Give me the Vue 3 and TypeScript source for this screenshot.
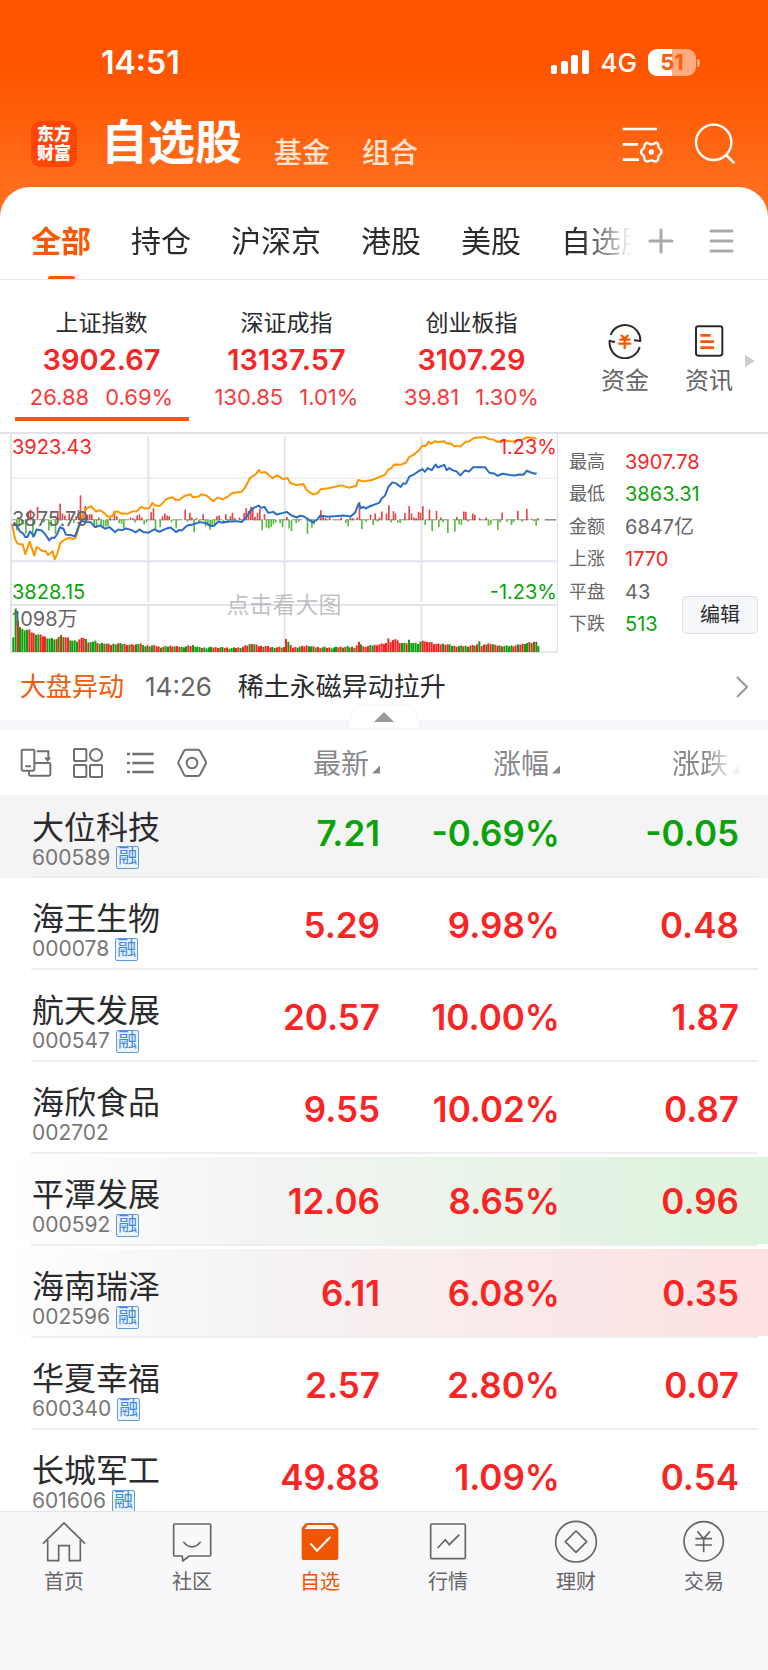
<script setup lang="ts">
import { ref } from 'vue'

type Trend = 'up' | 'down'
type Point = [number, number]

interface Stock {
  name: string
  code: string
  margin: boolean
  price: string
  percent: string
  diff: string
  trend: Trend
  state?: 'pinned' | 'flash-down' | 'flash-up'
}

const groups = ['全部', '持仓', '沪深京', '港股', '美股', '自选股']
const activeGroup = ref('全部')

const indices = [
  { name: '上证指数', value: '3902.67', diff: '26.88', percent: '0.69%' },
  { name: '深证成指', value: '13137.57', diff: '130.85', percent: '1.01%' },
  { name: '创业板指', value: '3107.29', diff: '39.81', percent: '1.30%' },
]
const activeIndex = ref(0)

const stats = [
  { label: '最高', value: '3907.78', tone: 'up' },
  { label: '最低', value: '3863.31', tone: 'down' },
  { label: '金额', value: '6847亿', tone: 'flat' },
  { label: '上涨', value: '1770', tone: 'up' },
  { label: '平盘', value: '43', tone: 'flat' },
  { label: '下跌', value: '513', tone: 'down' },
]

const stocks: Stock[] = [
  { name: '大位科技', code: '600589', margin: true, price: '7.21', percent: '-0.69%', diff: '-0.05', trend: 'down', state: 'pinned' },
  { name: '海王生物', code: '000078', margin: true, price: '5.29', percent: '9.98%', diff: '0.48', trend: 'up' },
  { name: '航天发展', code: '000547', margin: true, price: '20.57', percent: '10.00%', diff: '1.87', trend: 'up' },
  { name: '海欣食品', code: '002702', margin: false, price: '9.55', percent: '10.02%', diff: '0.87', trend: 'up' },
  { name: '平潭发展', code: '000592', margin: true, price: '12.06', percent: '8.65%', diff: '0.96', trend: 'up', state: 'flash-down' },
  { name: '海南瑞泽', code: '002596', margin: true, price: '6.11', percent: '6.08%', diff: '0.35', trend: 'up', state: 'flash-up' },
  { name: '华夏幸福', code: '600340', margin: true, price: '2.57', percent: '2.80%', diff: '0.07', trend: 'up' },
  { name: '长城军工', code: '601606', margin: true, price: '49.88', percent: '1.09%', diff: '0.54', trend: 'up' },
]

const columns = ['最新', '涨幅', '涨跌']

const tabs = [
  { id: 'home', label: '首页' },
  { id: 'community', label: '社区' },
  { id: 'watch', label: '自选' },
  { id: 'market', label: '行情' },
  { id: 'wealth', label: '理财' },
  { id: 'trade', label: '交易' },
]
const activeTab = ref('watch')

const averageLine =
  '36,295 45,340 52,354 60,357 68,357 76,387 89,349 103,391 110,365 120,372 130,378 137,377 144,389 158,378 164,402 172,385 180,355 188,347 196,342 208,337 218,341 226,338 233,320 240,290 250,262 262,247 273,242 288,258 300,254 312,262 323,273 335,273 345,259 355,259 365,265 385,264 395,258 410,257 423,244 435,249 448,248 457,232 464,239 480,241 500,220 518,215 527,223 540,222 553,211 572,206 578,215 595,213 605,206 620,210 640,227 653,216 668,221 685,212 697,202 725,198 735,186 750,157 770,143 776,132 783,141 795,139 817,157 832,149 850,160 862,157 872,173 890,178 910,175 920,193 938,206 952,203 962,191 985,188 1025,179 1045,186 1068,181 1075,163 1090,167 1115,163 1140,153 1155,147 1165,131 1173,128 1183,116 1202,117 1218,110 1227,94 1240,87 1255,75 1267,60 1277,60 1286,47 1293,54 1305,46 1315,49 1333,46 1340,53 1352,52 1363,62 1370,59 1382,62 1395,49 1408,46 1422,36 1455,33 1465,39 1480,41 1492,48 1510,43 1540,47 1555,42 1568,41 1580,34 1595,35 1610,38'

const indexLine =
  '38,297 50,300 60,318 70,325 76,335 82,335 90,318 102,332 110,312 125,315 135,326 148,345 155,337 164,337 172,325 180,305 190,310 198,328 212,329 225,333 235,305 245,285 255,290 272,290 285,305 300,300 315,310 328,305 345,320 355,312 365,315 378,309 395,314 407,321 418,312 430,320 445,322 463,312 478,319 500,309 512,306 528,320 537,314 545,315 562,300 578,297 600,290 618,293 632,302 642,301 655,288 665,291 690,288 710,287 725,290 740,274 755,250 776,240 783,247 793,244 805,262 820,259 830,267 850,262 860,259 875,270 890,276 900,271 912,273 928,284 938,291 952,282 960,271 985,274 1030,270 1052,273 1065,262 1076,234 1083,248 1090,244 1097,249 1110,242 1137,232 1145,219 1155,210 1165,184 1177,170 1188,173 1202,184 1210,173 1218,174 1228,153 1245,144 1255,137 1267,130 1275,138 1283,127 1295,133 1307,116 1313,125 1333,117 1340,133 1348,127 1357,133 1370,137 1381,149 1395,134 1407,137 1420,124 1455,124 1468,141 1482,143 1492,150 1508,144 1530,148 1543,149 1558,146 1570,147 1580,135 1595,141 1605,144 1610,142'

// Minute momentum: [x, height], positive above the baseline and negative below it.
const momentum: Point[] = [
  [50, -32], [57, -20], [70, -14], [77, -42], [84, 26], [91, 32], [98, -54], [112, 40], [132, -8], [146, -32], [153, -20], [166, -42], [173, 27], [180, 50], [187, 20], [194, 14], [207, 20], [221, -10], [228, 12], [235, 30], [241, 75], [248, 25], [255, 43], [262, 16], [269, 18], [275, 17], [282, -18], [289, -24], [296, 8], [303, -16], [310, -22], [317, -20], [323, -18], [330, 8], [343, 28], [350, 12], [357, -10], [364, -12], [371, -26], [391, 8], [398, 6], [405, -8], [411, 14], [418, 18], [425, 8], [432, -14], [439, -8], [453, 24], [460, 36], [466, -30], [480, -22], [487, 12], [494, 20], [501, 14], [507, 12], [514, -8], [528, -26], [555, 32], [562, -6], [569, 22], [575, 8], [582, -38], [589, 6], [596, -8], [609, 18], [616, -20], [623, -14], [630, -30], [636, -18], [643, -14], [650, 12], [657, 14], [670, -12], [677, 18], [684, -8], [691, 12], [697, 22], [704, 6], [718, 8], [732, 22], [738, 36], [745, 28], [752, 40], [758, 34], [765, 10], [772, 22], [779, 34], [786, -32], [793, 18], [799, -24], [806, -26], [813, -22], [820, -14], [827, -8], [840, -10], [847, -22], [860, 10], [867, -26], [874, -34], [888, -10], [895, -6], [922, -42], [935, -24], [942, -14], [962, 30], [969, 14], [976, 6], [989, 6], [1023, 8], [1037, -10], [1044, -20], [1051, 8], [1058, 6], [1071, 8], [1078, 55], [1085, -28], [1098, -6], [1111, 17], [1119, -16], [1125, 20], [1132, -6], [1138, 8], [1145, 26], [1159, 20], [1166, 45], [1173, -8], [1180, 27], [1186, 20], [1193, -8], [1200, -10], [1214, 22], [1227, 42], [1234, 20], [1241, 8], [1248, 6], [1255, 25], [1261, 22], [1268, 42], [1275, -16], [1288, 32], [1296, -34], [1309, 28], [1316, -22], [1322, 8], [1329, -8], [1343, -40], [1364, -36], [1370, 10], [1377, -14], [1384, -16], [1391, 26], [1397, 25], [1404, -6], [1418, 20], [1424, 16], [1438, 6], [1458, 8], [1465, -18], [1472, -14], [1493, -30], [1500, -8], [1506, 23], [1520, -6], [1534, -16], [1540, -8], [1553, 28], [1566, -6], [1580, 34], [1594, 4], [1602, -4], [1608, -18], [1614, 6],
]

const volumeEnvelope: Point[] = [
  [40, 46], [46, 137], [53, 95], [60, 76], [70, 66], [85, 68], [100, 56], [120, 52], [145, 42], [172, 38], [180, 57], [188, 42], [200, 46], [215, 34], [235, 31], [242, 46], [255, 40], [265, 30], [275, 28], [283, 38], [292, 25], [310, 28], [330, 22], [355, 26], [390, 22], [412, 22], [418, 30], [430, 18], [460, 20], [480, 15], [515, 18], [545, 15], [582, 20], [600, 13], [650, 14], [700, 12], [725, 14], [757, 26], [775, 18], [795, 18], [815, 14], [853, 14], [860, 52], [867, 22], [880, 13], [895, 15], [925, 20], [940, 15], [990, 13], [1040, 16], [1065, 14], [1078, 30], [1090, 16], [1130, 22], [1158, 26], [1166, 45], [1173, 28], [1186, 40], [1200, 28], [1218, 25], [1227, 36], [1235, 28], [1255, 25], [1268, 36], [1280, 27], [1290, 32], [1305, 24], [1340, 24], [1360, 18], [1400, 18], [1430, 20], [1438, 34], [1445, 18], [1470, 27], [1485, 20], [1520, 18], [1550, 20], [1585, 28], [1600, 28], [1608, 36], [1615, 18],
]

// One letter per minute: r for a rising bar, g for a falling one.
const volumeTones =
  'ggrggggrrrggrrrggggrgrgrrggggrrrgrgggrggrgrrggrggrrgrrggrggrggrrrgrggrrgrrgggrrggggrggggrrrggrrgggrrgrrrgrgrrrgrrrggrrgrrgrrrggrrrggrgrrggrrgggrrgrggrgrrgrrrggrrrrrrrrrrrrggrggggggrrrrrrrrrgrrggrrggrggrrgrgrrgrrgrrgrggggrrgrrggrgrggrggrgggr'

function envelopeAt(x: number): number {
  const next = volumeEnvelope.findIndex(p => p[0] >= x)
  if (next <= 0) return volumeEnvelope[next === 0 ? 0 : volumeEnvelope.length - 1][1]
  const [x0, y0] = volumeEnvelope[next - 1]
  const [x1, y1] = volumeEnvelope[next]
  return y0 + ((y1 - y0) * (x - x0)) / (x1 - x0)
}

const volume = Array.from({ length: 232 }, (_, i) => {
  const x = Math.round(40 + i * 6.82)
  return {
    x: x - 3,
    height: Math.round(envelopeAt(x) + ((i * 7) % 5) - 2),
    tone: volumeTones[i % volumeTones.length] === 'r' ? 'up' : 'down',
  }
})
</script>

<template>
  <div class="app">
    <header class="top">
      <div class="status">
        <time>14:51</time>
        <div class="status-right">
          <svg class="signal" viewBox="0 0 38 24" aria-hidden="true">
            <rect x="0" y="15" width="6" height="9" rx="2" />
            <rect x="10" y="11" width="7" height="13" rx="2" />
            <rect x="20" y="5" width="7" height="19" rx="2" />
            <rect x="31" y="0" width="7" height="24" rx="2" />
          </svg>
          <span class="network">4G</span>
          <span class="battery"><span>51</span></span>
        </div>
      </div>
      <div class="title-row">
        <div class="logo"><span>东方</span><span>财富</span></div>
        <h1>自选股</h1>
        <a href="#fund">基金</a>
        <a href="#combo">组合</a>
        <div class="title-actions">
          <button type="button" aria-label="列表设置">
            <svg width="42" height="42" viewBox="714 366 126 126" fill="none" stroke="#fff" stroke-width="8">
              <path d="M716 384H819M716 430H762M716 476H765" />
              <path d="M792 427Q802 433 812 427L817 425Q824 428 823 437Q824 443 832 448Q834 454 829 460Q822 464 823 472Q822 480 814 482Q808 478 802 478Q796 478 790 482Q782 480 781 472Q782 464 774 460Q769 454 773 447Q782 442 781 435Q782 428 789 425Z" stroke-width="7" stroke-linejoin="round" />
              <circle cx="802" cy="453" r="8" fill="#fff" stroke="none" />
            </svg>
          </button>
          <button type="button" aria-label="搜索">
            <svg width="42" height="42" viewBox="930 366 126 126" fill="none" stroke="#fff" stroke-width="7">
              <circle cx="989" cy="424" r="53" />
              <path d="M1025 460L1051 487" stroke-width="8" />
            </svg>
          </button>
        </div>
      </div>
    </header>

    <nav class="groups" aria-label="分组">
      <div class="group-list">
        <button
          v-for="group in groups"
          :key="group"
          type="button"
          :class="{ active: group === activeGroup }"
          @click="activeGroup = group"
        >{{ group }}</button>
      </div>
      <button class="group-tool" type="button" aria-label="添加分组">
        <svg width="26" height="26" viewBox="0 0 26 26" fill="none" stroke="#aaa" stroke-width="3" stroke-linecap="round">
          <path d="M13 2V24M2 13H24" />
        </svg>
      </button>
      <button class="group-tool" type="button" aria-label="管理分组">
        <svg width="26" height="26" viewBox="0 0 26 26" fill="none" stroke="#aaa" stroke-width="3" stroke-linecap="round">
          <path d="M3 3H24M3 13H24M3 23H24" />
        </svg>
      </button>
    </nav>

    <main>
      <section class="indices">
        <button
          v-for="(item, i) in indices"
          :key="item.name"
          type="button"
          class="index"
          :class="{ active: i === activeIndex }"
          @click="activeIndex = i"
        >
          <span class="index-name">{{ item.name }}</span>
          <strong>{{ item.value }}</strong>
          <span class="index-change"><span>{{ item.diff }}</span><span>{{ item.percent }}</span></span>
        </button>
        <div class="shortcuts">
          <a href="#capital">
            <svg width="36" height="36" viewBox="668 99 108 108" fill="none" stroke="#2b2b2d" stroke-width="6">
              <path d="M679 135A46 46 0 0 1 768 153L749 151M766 171A46 46 0 0 1 676 153L692 156" />
              <path d="M710 135L721 146L732 135M705 149H738M702 161H741M721 146V177" stroke="#ff5500" stroke-width="7" />
            </svg>
            <span>资金</span>
          </a>
          <a href="#news">
            <svg width="36" height="36" viewBox="920 99 108 108" fill="none" stroke="#2b2b2d" stroke-width="6">
              <rect x="935" y="109" width="79" height="88" rx="7" />
              <path d="M948 136H979M948 155H989M948 173H989" stroke="#ff5500" stroke-width="8" />
            </svg>
            <span>资讯</span>
          </a>
          <svg class="more" width="10" height="12" viewBox="0 0 10 12" aria-hidden="true"><path d="M0 0L10 6L0 12Z" fill="#ccc" /></svg>
        </div>
      </section>

      <section class="market">
        <div class="chart">
          <svg viewBox="30 24 1644 661" preserveAspectRatio="none" role="img" aria-label="上证指数分时图">
            <g fill="none" stroke="#e1e4ed" stroke-width="6">
              <path d="M33 24V685M1673 24V685M445 32V532M854 32V532M1264 32V532M445 545V680M854 545V680M1264 545V680" />
              <path d="M30 157H1674" stroke-width="3" />
              <path d="M30 408H1674M30 540H1674M30 683H1674" />
            </g>
            <path d="M37 283H1618" stroke="#888" stroke-width="3" stroke-dasharray="30 10" />
            <path d="M1634 283H1668" stroke="#777" stroke-width="4" />
            <rect
              v-for="[x, h] in momentum"
              :key="`m${x}`"
              :x="x - 2"
              :y="h > 0 ? 284 - h : 283"
              width="5"
              :height="Math.abs(h)"
              :fill="h > 0 ? '#e5484b' : '#5fb944'"
            />
            <rect
              v-for="bar in volume"
              :key="`v${bar.x}`"
              :x="bar.x"
              :y="682 - bar.height"
              width="6"
              :height="bar.height"
              :fill="bar.tone === 'up' ? '#fa2323' : '#0c9f0c'"
            />
            <g fill="none" stroke-width="6" stroke-linejoin="round">
              <polyline :points="averageLine" stroke="#ff9600" />
              <polyline :points="indexLine" stroke="#2b6cc4" />
            </g>
          </svg>
          <span class="mark high up">3923.43</span>
          <span class="mark high right up">1.23%</span>
          <span class="mark base">3875.79</span>
          <span class="mark low down">3828.15</span>
          <span class="mark low right down">-1.23%</span>
          <span class="mark vol">1098万</span>
          <span class="hint">点击看大图</span>
        </div>
        <div class="summary">
          <dl>
            <div v-for="stat in stats" :key="stat.label">
              <dt>{{ stat.label }}</dt>
              <dd :class="stat.tone">{{ stat.value }}</dd>
            </div>
          </dl>
          <button type="button" class="edit">编辑</button>
        </div>
      </section>

      <a class="bulletin" href="#bulletin">
        <span class="bulletin-tag">大盘异动</span>
        <time>14:26</time>
        <span class="bulletin-text">稀土永磁异动拉升</span>
        <svg width="12" height="22" viewBox="0 0 12 22" fill="none" stroke="#999" stroke-width="2"><path d="M1 1L11 11L1 21" /></svg>
      </a>

      <div class="divider">
        <button type="button" aria-label="收起">
          <svg width="74" height="24" viewBox="0 0 74 24">
            <path d="M1 24L4 10Q6 1 16 1H58Q68 1 70 10L73 24" fill="#fff" stroke="#f0f1f4" stroke-width="1" />
            <path d="M27 18L37 8L47 18Z" fill="#999" />
          </svg>
        </button>
      </div>

      <table class="stocks">
        <thead>
          <tr>
            <th scope="col" class="tools">
              <div>
                <button type="button" aria-label="横屏">
                  <svg width="32" height="32" viewBox="60 262 96 96" fill="none" stroke="#707073" stroke-width="6">
                    <rect x="65" y="270" width="38" height="63" rx="4" />
                    <path d="M76 320H93M110 275H145V300M136 293L143 302L150 293M103 310H147Q151 310 151 314V344Q151 348 147 348H91Q87 348 87 344V333" />
                  </svg>
                </button>
                <button type="button" aria-label="宫格">
                  <svg width="32" height="32" viewBox="217 262 96 96" fill="none" stroke="#707073" stroke-width="6">
                    <rect x="223" y="268" width="37" height="36" rx="2" />
                    <rect x="223" y="316" width="37" height="36" rx="2" />
                    <rect x="271" y="316" width="36" height="36" rx="2" />
                    <circle cx="289" cy="286" r="18" />
                  </svg>
                </button>
                <button type="button" aria-label="列表">
                  <svg width="32" height="32" viewBox="375 262 96 96" fill="none" stroke="#707073" stroke-width="8">
                    <path d="M400 283H464M400 310H464M400 337H464M384 283H393M384 310H393M384 337H393" />
                  </svg>
                </button>
                <button type="button" aria-label="设置">
                  <svg width="32" height="32" viewBox="533 262 96 96" fill="none" stroke="#707073" stroke-width="6" stroke-linejoin="round">
                    <path d="M563 270H599Q603 270 605 274L622 305Q624 309 622 313L605 345Q603 349 599 349H563Q559 349 557 345L541 313Q539 309 541 305L557 274Q559 270 563 270Z" />
                    <circle cx="581" cy="310" r="16" />
                  </svg>
                </button>
              </div>
            </th>
            <th v-for="column in columns" :key="column" scope="col">
              <button type="button" class="sort">{{ column }}<i></i></button>
            </th>
          </tr>
        </thead>
        <tbody>
          <tr v-for="stock in stocks" :key="stock.code" :class="stock.state">
            <td class="security">
              <span class="name">{{ stock.name }}</span>
              <span class="code">{{ stock.code }}<b v-if="stock.margin">融</b></span>
            </td>
            <td :class="stock.trend">{{ stock.price }}</td>
            <td :class="stock.trend">{{ stock.percent }}</td>
            <td :class="stock.trend">{{ stock.diff }}</td>
          </tr>
        </tbody>
      </table>
    </main>

    <nav class="tabbar" aria-label="主导航">
      <a
        v-for="tab in tabs"
        :key="tab.id"
        :href="`#${tab.id}`"
        :class="{ active: tab.id === activeTab }"
        @click="activeTab = tab.id"
      >
        <svg width="48" height="48" viewBox="0 0 144 144" fill="none" stroke="currentColor" stroke-width="5">
          <g v-if="tab.id === 'home'">
            <path d="M9 77L72 15L135 77" />
            <path d="M23 66V128H56V83H88V128H121V66" />
          </g>
          <path
            v-else-if="tab.id === 'community'"
            stroke-linejoin="round"
            d="M21 18H124Q128 18 128 22V110Q128 114 124 114H64L44 129L43 114H21Q17 114 17 110V22Q17 18 21 18ZM46 71Q72 102 98 71"
          />
          <g v-else-if="tab.id === 'watch'">
            <path d="M34 15H111Q115 15 118 18L127 30V119Q127 126 120 126H25Q17 126 17 119V30L27 18Q30 15 34 15Z" fill="currentColor" stroke="none" />
            <path d="M35 21H109L118 33H26Z" fill="#f8f8fa" stroke="none" />
            <path d="M43 76L63 98L103 57" stroke="#fff" stroke-width="6" />
          </g>
          <g v-else-if="tab.id === 'market'">
            <rect x="20" y="18" width="104" height="104" rx="4" />
            <path d="M41 90L64 65L76 80L106 50" />
          </g>
          <g v-else-if="tab.id === 'wealth'">
            <circle cx="72" cy="71" r="61" />
            <path d="M72 39L104 71L72 103L40 71Z" stroke-linejoin="round" />
          </g>
          <g v-else>
            <circle cx="71" cy="70" r="59" />
            <path d="M52 40L71 62L90 40M46 62H96M46 81H96M71 62V103" />
          </g>
        </svg>
        <span>{{ tab.label }}</span>
      </a>
    </nav>
  </div>
</template>

<style>
body {
  background: #fff;
}
</style>

<style scoped>
.app {
  display: flex;
  flex-direction: column;
  height: 100vh;
  overflow: hidden;
  color: #2b2b2d;
  background: #fff;
  font-family: Inter, "Noto Sans CJK SC", sans-serif;
}

.app * {
  box-sizing: border-box;
}

button {
  margin: 0;
  padding: 0;
  border: 0;
  background: none;
  color: inherit;
  font: inherit;
  cursor: pointer;
}

a {
  color: inherit;
  text-decoration: none;
}

svg {
  display: block;
}

.up {
  color: #f92525;
}

.down {
  color: #0aa30a;
}

.flat {
  color: #666;
}

.top {
  flex: none;
  padding-bottom: 48px;
  background: linear-gradient(#ff5500 70px, #ff6e1c 187px);
  color: #fff;
}

.status {
  display: flex;
  align-items: center;
  justify-content: space-between;
  height: 80px;
  padding: 44px 72px 0 101px;
}

.status time {
  font-size: 32px;
  font-weight: 600;
}

.status-right {
  display: flex;
  align-items: center;
}

.signal {
  width: 38px;
  height: 24px;
  fill: #fff;
}

.network {
  margin: 0 11px 0 12px;
  font-size: 26px;
  font-weight: 500;
}

.battery {
  position: relative;
  width: 48px;
  height: 27px;
  border-radius: 9px;
  background: linear-gradient(90deg, #fff 50%, #ffab80 50%);
  color: #ff5a08;
  font-size: 22px;
  font-weight: 700;
  line-height: 27px;
  text-align: center;
}

.battery::after {
  content: "";
  position: absolute;
  top: 10px;
  right: -4px;
  width: 3px;
  height: 8px;
  border-radius: 0 4px 4px 0;
  background: #ffab80;
}

.title-row {
  display: flex;
  align-items: flex-end;
  height: 107px;
  padding: 0 32px 20px 31px;
}

.logo {
  display: flex;
  flex-direction: column;
  align-items: center;
  justify-content: center;
  width: 46px;
  height: 46px;
  border-radius: 9px;
  background: #ff4607;
  font-size: 17px;
  font-weight: 900;
  line-height: 19px;
}

h1 {
  margin: 0 0 0 24px;
  font-size: 47px;
  font-weight: 700;
  line-height: 50px;
}

.title-row > a {
  margin-left: 32px;
  color: #ffe2d1;
  font-size: 28px;
  font-weight: 500;
  line-height: 28px;
}

.title-actions {
  display: flex;
  gap: 30px;
  margin: 0 0 2px auto;
}

.groups {
  position: relative;
  display: flex;
  flex: none;
  align-items: center;
  gap: 30px;
  height: 93px;
  margin-top: -48px;
  padding: 0 34px 0 31px;
  border-bottom: 1px solid #e9e9eb;
  border-radius: 30px 30px 0 0;
  background: #fff;
}

.group-list {
  display: flex;
  flex: 1;
  align-self: stretch;
  gap: 40px;
  overflow: hidden;
  padding-top: 17px;
  margin-right: -14px;
  mask-image: linear-gradient(90deg, #000 calc(100% - 50px), transparent);
}

.group-list button {
  position: relative;
  flex: none;
  height: 76px;
  padding-bottom: 6px;
  font-size: 30px;
  white-space: nowrap;
}

.group-list .active {
  color: #ff5500;
  font-weight: 700;
}

.group-list .active::after {
  content: "";
  position: absolute;
  bottom: 0;
  left: calc(50% - 13px);
  width: 27px;
  height: 4px;
  border-radius: 2px;
  background: #ff5500;
}

.group-tool {
  padding-top: 16px;
}

.group-tool:last-child {
  margin-left: 4px;
}

main {
  flex: 1;
  min-height: 0;
  overflow: hidden;
}

.indices {
  display: flex;
  height: 152px;
  padding: 26px 13px 0 9px;
}

.index {
  position: relative;
  display: flex;
  flex: 185;
  flex-direction: column;
  align-items: center;
  height: 115px;
  white-space: nowrap;
}

.index-name {
  font-size: 23px;
  line-height: 34px;
}

.index strong {
  color: #f92525;
  font-size: 29px;
  font-weight: 600;
  line-height: 40px;
}

.index-change {
  display: flex;
  gap: 16px;
  color: #f93a3a;
  font-size: 22px;
  line-height: 34px;
}

.index.active::after {
  content: "";
  position: absolute;
  right: 5px;
  bottom: 0;
  left: 6px;
  height: 4px;
  background: #ff5500;
}

.shortcuts {
  display: flex;
  flex: 191;
  align-items: center;
  justify-content: flex-end;
  gap: 36px;
  height: 109px;
}

.shortcuts a {
  display: flex;
  flex-direction: column;
  align-items: center;
  color: #666;
  font-size: 24px;
  line-height: 36px;
}

.shortcuts a svg {
  margin-bottom: 4px;
}

.more {
  margin-left: -24px;
}

.market {
  display: flex;
  height: 221px;
  border-top: 2px solid #e1e3e8;
}

.chart {
  position: relative;
  flex: 1;
  margin-left: 10px;
}

.chart > svg {
  width: 100%;
  height: 219px;
}

.mark {
  position: absolute;
  left: 2px;
  font-size: 20px;
  line-height: 24px;
}

.mark.right {
  right: 1px;
  left: auto;
}

.high {
  top: 1px;
}

.base {
  top: 73px;
  color: #666;
}

.low {
  top: 146px;
}

.vol {
  top: 173px;
  color: #666;
}

.hint {
  position: absolute;
  top: 155px;
  right: 0;
  left: 0;
  color: #9999;
  font-size: 23px;
  line-height: 32px;
  text-align: center;
}

.summary {
  display: flex;
  flex: none;
  justify-content: space-between;
  width: 210px;
  padding: 12px 10px 0 11px;
}

dl {
  display: flex;
  flex-direction: column;
  justify-content: space-between;
  height: 194px;
  margin: 0;
}

dl div {
  display: flex;
  gap: 20px;
  height: 32px;
  color: #666;
  font-size: 18px;
  line-height: 32px;
}

dd {
  width: 40px;
  margin: 0;
  font-size: 20px;
  white-space: nowrap;
}

.edit {
  align-self: flex-end;
  flex: none;
  width: 76px;
  height: 38px;
  margin-bottom: 19px;
  border: 1px solid #dcdfe5;
  border-radius: 4px;
  background: #f6f7fa;
  font-size: 20px;
  line-height: 34px;
}

.bulletin {
  display: flex;
  align-items: center;
  height: 67px;
  padding: 0 20px;
  font-size: 26px;
  line-height: 40px;
}

.bulletin-tag {
  color: #f05a0a;
}

.bulletin time {
  margin: 0 26px 0 21px;
  color: #666;
}

.bulletin svg {
  margin-left: auto;
}

.divider {
  position: relative;
  height: 10px;
  background: #f5f7fa;
}

.divider button {
  position: absolute;
  bottom: 2px;
  left: calc(50% - 37px);
}

.stocks {
  width: 100%;
  border-collapse: collapse;
  table-layout: fixed;
}

th {
  width: 180px;
  height: 65px;
  padding: 2px 0 0;
  font-weight: 400;
  text-align: right;
}

th:nth-child(2) {
  width: 160px;
}

th:last-child {
  width: 208px;
  padding-right: 29px;
}

th:first-child {
  width: auto;
  padding: 0;
}

.tools div {
  display: flex;
  gap: 20px;
  padding-left: 20px;
}

.sort {
  color: #88888b;
  font-size: 28px;
  line-height: 40px;
}

.sort i {
  display: inline-block;
  width: 8px;
  height: 8px;
  margin-left: 3px;
  background: #88888f;
  clip-path: polygon(100% 0, 100% 100%, 0 100%);
}

th:last-child .sort {
  mask-image: linear-gradient(90deg, #000 50%, #0002 88%);
}

td {
  height: 92px;
  padding: 2px 0 0;
  font-size: 35px;
  font-weight: 600;
  line-height: 44px;
  text-align: right;
  vertical-align: middle;
}

td:last-child {
  padding-right: 29px;
}

tbody tr {
  background: linear-gradient(#eee, #eee) 31px 100% / calc(100% - 41px) 2px no-repeat;
}

.pinned {
  background-color: #f4f4f5;
}

.pinned td {
  height: 83px;
  padding-top: 0;
  padding-bottom: 8px;
}

.flash-down {
  background:
    linear-gradient(#eee, #eee) 31px 100% / calc(100% - 41px) 2px no-repeat,
    linear-gradient(90deg, #fff, #f3f4f3 33%, #def3de 95%) 0 3px / 100% 87px no-repeat;
}

.flash-up {
  background:
    linear-gradient(#eee, #eee) 31px 100% / calc(100% - 41px) 2px no-repeat,
    linear-gradient(90deg, #fff, #f5f3f3 33%, #fde2e2 95%) 0 3px / 100% 87px no-repeat;
}

td.security {
  padding-top: 14px;
  padding-left: 32px;
  font-weight: 400;
  text-align: left;
}

.pinned td.security {
  padding-top: 6px;
  padding-bottom: 0;
}

.name,
.code {
  display: flex;
  align-items: center;
}

.name {
  height: 36px;
  font-size: 32px;
}

.code {
  gap: 6px;
  height: 24px;
  color: #777;
  font-size: 21px;
  line-height: 24px;
}

.code b {
  width: 23px;
  height: 23px;
  border: 1px solid #5b9be6;
  border-radius: 2px;
  background: #edf4fc;
  color: #3d8ae0;
  font-size: 19px;
  font-weight: 400;
  line-height: 20px;
  text-align: center;
}

.tabbar {
  display: flex;
  flex: none;
  height: 159px;
  padding-top: 6px;
  border-top: 1px solid #e2e3e8;
  background: #f8f8fb;
}

.tabbar a {
  display: flex;
  flex: 1;
  flex-direction: column;
  align-items: center;
  color: #666;
  font-size: 20px;
  line-height: 32px;
}

.tabbar .active {
  color: #f05503;
}
</style>
